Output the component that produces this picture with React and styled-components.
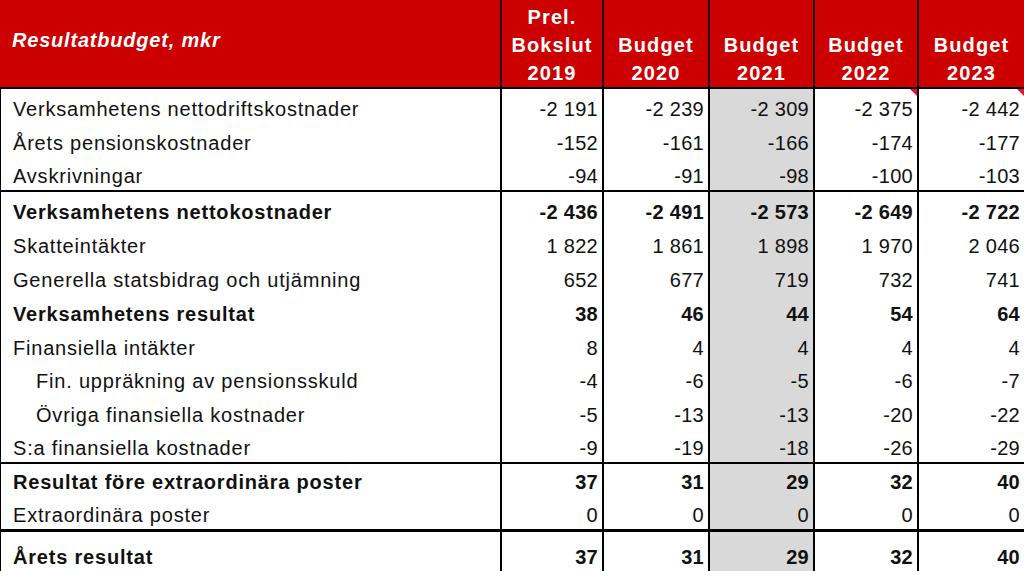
import React from 'react';
import styled, { createGlobalStyle, css } from 'styled-components';

const GlobalStyle = createGlobalStyle`
  html, body {
    margin: 0;
    padding: 0;
    background: #fff;
  }
  body {
    font-family: "Liberation Sans", Arial, sans-serif;
  }
`;

const COLS = '502px 102px 106px 105px 104px 1fr';

const Sheet = styled.div`
  width: 1024px;
  height: 571px;
  overflow: hidden;
  background: #fff;
  color: #111;
`;

const HeaderRow = styled.div`
  display: grid;
  grid-template-columns: ${COLS};
  height: 89px;
  box-sizing: border-box;
  background: #cc0000;
  border-bottom: 2px solid #000;
`;

const HeadCell = styled.div`
  display: flex;
  flex-direction: column;
  justify-content: flex-end;
  align-items: center;
  border-right: 2px solid #1a0000;
  color: #fff;
  font-weight: bold;
  font-size: 20px;
  line-height: 28px;
  letter-spacing: 1.1px;
  white-space: nowrap;

  &:last-child {
    border-right: none;
  }
`;

const TitleCell = styled(HeadCell)`
  align-items: flex-start;
  justify-content: center;
  padding: 0 0 8px 12px;
  font-style: italic;
  letter-spacing: 0.8px;
`;

const Section = styled.div`
  border-top: ${p => p.$top || 0}px solid #000;
`;

const Row = styled.div`
  display: grid;
  grid-template-columns: ${COLS};
  height: ${p => p.$h}px;
  font-size: 20px;
  line-height: 23px;
  ${p =>
    p.$bold &&
    css`
      font-weight: bold;
    `}
`;

const Label = styled.div`
  display: flex;
  align-items: flex-end;
  box-sizing: border-box;
  border-left: 1px solid #000;
  border-right: 2px solid #000;
  padding: 0 0 2px ${p => (p.$indent ? 35 : 12)}px;
  letter-spacing: 0.8px;
  white-space: nowrap;
`;

const Num = styled.div`
  position: relative;
  display: flex;
  align-items: flex-end;
  justify-content: flex-end;
  box-sizing: border-box;
  border-right: 2px solid #000;
  padding: 0 4px 2px 0;
  letter-spacing: 0.3px;
  white-space: nowrap;
  background: ${p => (p.$shade ? '#d9d9d9' : 'transparent')};

  &:last-child {
    border-right: none;
  }
`;

const Flag = styled.span`
  position: absolute;
  top: 0;
  right: 0;
  width: 0;
  height: 0;
  border-left: 7px solid transparent;
  border-top: 7px solid #e8102a;
`;

const headers = [
  ['Prel.', 'Bokslut', '2019'],
  ['Budget', '2020'],
  ['Budget', '2021'],
  ['Budget', '2022'],
  ['Budget', '2023'],
];

const sections = [
  {
    top: 0,
    rows: [
      { label: 'Verksamhetens nettodriftskostnader', values: ['-2 191', '-2 239', '-2 309', '-2 375', '-2 442'], h: 34, flags: [3, 4] },
      { label: 'Årets pensionskostnader', values: ['-152', '-161', '-166', '-174', '-177'], h: 34 },
      { label: 'Avskrivningar', values: ['-94', '-91', '-98', '-100', '-103'], h: 33 },
    ],
  },
  {
    top: 2,
    rows: [
      { label: 'Verksamhetens nettokostnader', values: ['-2 436', '-2 491', '-2 573', '-2 649', '-2 722'], h: 34, bold: true },
      { label: 'Skatteintäkter', values: ['1 822', '1 861', '1 898', '1 970', '2 046'], h: 34 },
      { label: 'Generella statsbidrag och utjämning', values: ['652', '677', '719', '732', '741'], h: 34 },
      { label: 'Verksamhetens resultat', values: ['38', '46', '44', '54', '64'], h: 34, bold: true },
      { label: 'Finansiella intäkter', values: ['8', '4', '4', '4', '4'], h: 34 },
      { label: 'Fin. uppräkning av pensionsskuld', values: ['-4', '-6', '-5', '-6', '-7'], h: 33, indent: true },
      { label: 'Övriga finansiella kostnader', values: ['-5', '-13', '-13', '-20', '-22'], h: 34, indent: true },
      { label: 'S:a finansiella kostnader', values: ['-9', '-19', '-18', '-26', '-29'], h: 33 },
    ],
  },
  {
    top: 2,
    rows: [
      { label: 'Resultat före extraordinära poster', values: ['37', '31', '29', '32', '40'], h: 32, bold: true },
      { label: 'Extraordinära poster', values: ['0', '0', '0', '0', '0'], h: 33 },
    ],
  },
  {
    top: 3,
    rows: [
      { label: 'Årets resultat', values: ['37', '31', '29', '32', '40'], h: 39, bold: true },
    ],
  },
];

export default function App() {
  return (
    <>
      <GlobalStyle />
      <Sheet>
        <HeaderRow>
          <TitleCell>Resultatbudget, mkr</TitleCell>
          {headers.map((lines, i) => (
            <HeadCell key={i}>
              {lines.map(line => (
                <span key={line}>{line}</span>
              ))}
            </HeadCell>
          ))}
        </HeaderRow>

        {sections.map((section, si) => (
          <Section key={si} $top={section.top}>
            {section.rows.map(row => (
              <Row key={row.label} $h={row.h} $bold={row.bold}>
                <Label $indent={row.indent}>{row.label}</Label>
                {row.values.map((v, i) => (
                  <Num key={i} $shade={i === 2}>
                    {row.flags && row.flags.includes(i) && <Flag />}
                    {v}
                  </Num>
                ))}
              </Row>
            ))}
          </Section>
        ))}
      </Sheet>
    </>
  );
}
